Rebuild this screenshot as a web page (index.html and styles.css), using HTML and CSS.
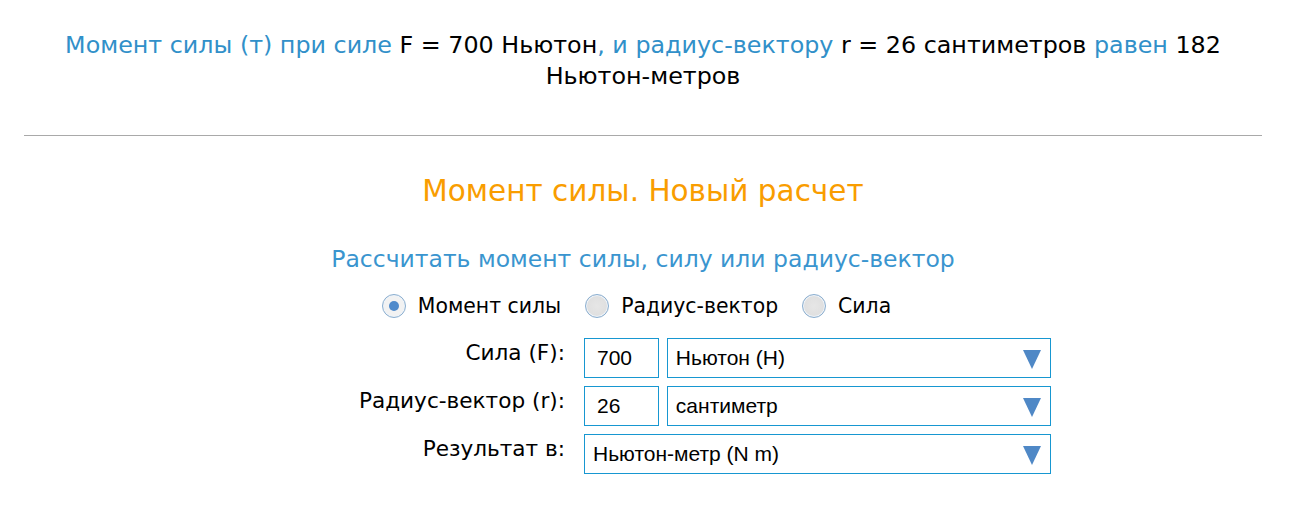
FILE: index.html
```html
<!DOCTYPE html>
<html lang="ru">
<head>
<meta charset="utf-8">
<link rel="stylesheet" href="styles.css">
</head>
<body>
<div class="page">
  <p class="result"><span class="b">Момент силы (т) при силе</span> <span class="k">F = 700 Ньютон</span><span class="b">, и радиус-вектору</span> <span class="k">r = 26 сантиметров</span> <span class="b">равен</span> <span class="k">182</span> <span class="k">Ньютон-метров</span></p>
  <hr class="sep">
  <h2 class="title">Момент силы. Новый расчет</h2>
  <h3 class="sub">Рассчитать момент силы, силу или радиус-вектор</h3>
  <div class="radios">
    <label class="radio"><span class="dot on"></span>Момент силы</label>
    <label class="radio"><span class="dot"></span>Радиус-вектор</label>
    <label class="radio"><span class="dot"></span>Сила</label>
  </div>
  <div class="form">
    <div class="lbl">Сила (F):</div>
    <div class="fields">
      <div class="num">700</div>
      <div class="sel">Ньютон (Н)<span class="arr"></span></div>
    </div>
    <div class="lbl">Радиус-вектор (r):</div>
    <div class="fields">
      <div class="num">26</div>
      <div class="sel">сантиметр<span class="arr"></span></div>
    </div>
    <div class="lbl">Результат в:</div>
    <div class="fields">
      <div class="sel wide">Ньютон-метр (N m)<span class="arr"></span></div>
    </div>
  </div>
</div>
</body>
</html>
```
FILE: styles.css
```css
html, body { margin: 0; padding: 0; background: #fff; }
body { font-family: "DejaVu Sans", Verdana, sans-serif; color: #000; }
.page { padding: 0 29px 0 24px; }
.result {
  margin: 30px 20px 0;
  text-align: center;
  font-size: 23.8px;
  line-height: 31px;
}
.b { color: #3190c9; }
.k { white-space: nowrap; }
.sep {
  border: 0;
  border-top: 1px solid #a9a9a9;
  height: 0;
  margin: 43px 0 0;
}
.title {
  margin: 37px 0 0;
  text-align: center;
  color: #f99d00;
  font-weight: normal;
  font-size: 29.5px;
  line-height: 36px;
}
.sub {
  margin: 35px 0 0;
  text-align: center;
  color: #3a95cf;
  font-weight: normal;
  font-size: 23.5px;
  line-height: 30px;
}
.radios {
  margin-top: 19px;
  display: flex;
  justify-content: center;
  gap: 24px;
  padding-right: 13px;
  font-size: 20.4px;
  line-height: 26px;
}
.radio { display: flex; align-items: center; gap: 12px; }
.dot {
  width: 22px; height: 22px;
  border-radius: 50%;
  border: 1px solid #8aaed0;
  background: radial-gradient(circle, #e6e6e6 0, #dcdcdc 100%);
  box-shadow: inset 0 0 0 1px #eef3f8;
  position: relative;
}
.dot.on { background: #f2f2f2; }
.dot.on::after {
  content: "";
  position: absolute;
  left: 6px; top: 6px;
  width: 10px; height: 10px;
  border-radius: 50%;
  background: #4f8acb;
}
.form {
  margin: 19px 0 0 216px;
  display: grid;
  grid-template-columns: 325px 467px;
  column-gap: 19px;
  row-gap: 8px;
  width: 811px;
}
.lbl {
  text-align: right;
  font-size: 21.6px;
  line-height: 26px;
  padding-top: 2px;
  white-space: nowrap;
}
.fields { display: flex; gap: 8px; }
.num, .sel {
  box-sizing: border-box;
  height: 40px;
  border: 1px solid #1797d1;
  font-family: "Liberation Sans", Arial, sans-serif;
  font-size: 21px;
  display: flex;
  align-items: center;
}
.num { width: 75px; padding-left: 12px; }
.sel { width: 385px; padding-left: 8px; position: relative; }
.sel.wide { width: 467px; }
.arr {
  position: absolute;
  right: 9px; top: 11px;
  width: 0; height: 0;
  border-left: 9px solid transparent;
  border-right: 9px solid transparent;
  border-top: 19px solid #4f88c6;
}
```
